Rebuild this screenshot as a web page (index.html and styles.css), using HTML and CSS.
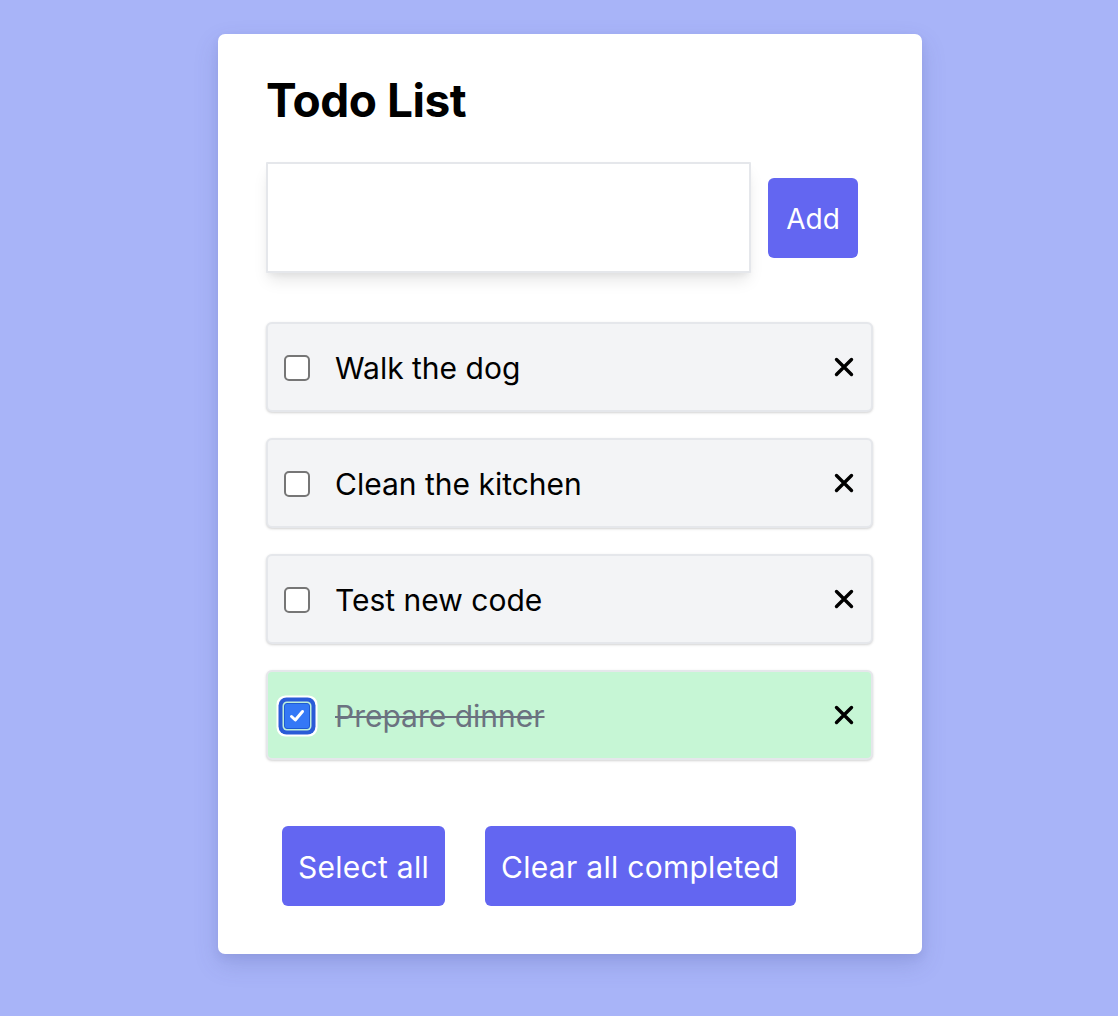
FILE: index.html
```html
<!DOCTYPE html>
<html lang="en">
<head>
<meta charset="utf-8">
<title>Todo List</title>
<link rel="stylesheet" href="styles.css">
</head>
<body>
<main class="card">
  <h1 class="title">Todo List</h1>
  <form class="add-row">
    <input class="add-input" type="text" aria-label="New todo">
    <button class="btn add-btn" type="button">Add</button>
  </form>
  <ul class="list">
    <li class="item">
      <span class="check"></span>
      <span class="label">Walk the dog</span>
      <svg class="remove" viewBox="0 0 20 20" width="20" height="20"><path d="M2.5 2.5 L17.5 17.5 M17.5 2.5 L2.5 17.5" stroke="#000" stroke-width="3.4" stroke-linecap="round"/></svg>
    </li>
    <li class="item">
      <span class="check"></span>
      <span class="label">Clean the kitchen</span>
      <svg class="remove" viewBox="0 0 20 20" width="20" height="20"><path d="M2.5 2.5 L17.5 17.5 M17.5 2.5 L2.5 17.5" stroke="#000" stroke-width="3.4" stroke-linecap="round"/></svg>
    </li>
    <li class="item">
      <span class="check"></span>
      <span class="label">Test new code</span>
      <svg class="remove" viewBox="0 0 20 20" width="20" height="20"><path d="M2.5 2.5 L17.5 17.5 M17.5 2.5 L2.5 17.5" stroke="#000" stroke-width="3.4" stroke-linecap="round"/></svg>
    </li>
    <li class="item done">
      <span class="check checked">
        <svg viewBox="0 0 20 20" width="20" height="20"><path d="M4.5 10.5 L8.3 14 L15.5 5.5" fill="none" stroke="#fff" stroke-width="3" stroke-linecap="round" stroke-linejoin="round"/></svg>
      </span>
      <span class="label">Prepare dinner</span>
      <svg class="remove" viewBox="0 0 20 20" width="20" height="20"><path d="M2.5 2.5 L17.5 17.5 M17.5 2.5 L2.5 17.5" stroke="#000" stroke-width="3.4" stroke-linecap="round"/></svg>
    </li>
  </ul>
  <div class="actions">
    <button class="btn action-btn" type="button">Select all</button>
    <button class="btn action-btn" type="button">Clear all completed</button>
  </div>
</main>
</body>
</html>
```
FILE: styles.css
```css
* { box-sizing: border-box; }
html, body { margin: 0; padding: 0; }
body {
  background: #a8b4f8;
  font-family: Inter, "Noto Sans", sans-serif;
  min-height: 1016px;
  padding-top: 34px;
}
.card {
  width: 704px;
  margin: 0 0 0 218px;
  background: #fff;
  border-radius: 7px;
  box-shadow: 0 10px 25px rgba(60, 70, 140, 0.18), 0 4px 8px rgba(60, 70, 140, 0.08);
  padding: 38px 48px 48px;
}
.title {
  margin: 0;
  font-size: 46px;
  font-weight: 700;
  line-height: 56px;
  color: #000;
  letter-spacing: -0.5px;
}
.add-row {
  display: flex;
  align-items: center;
  margin: 34px 0 0;
  gap: 17px;
}
.add-input {
  width: 485px;
  height: 111px;
  border: 2px solid #e5e7eb;
  border-radius: 1px;
  background: #fff;
  box-shadow: 0 10px 15px -3px rgba(0,0,0,0.1), 0 4px 6px -2px rgba(0,0,0,0.05);
  font: inherit;
  font-size: 28px;
  padding: 0 16px;
  outline: none;
}
.btn {
  background: #6366f1;
  color: #fff;
  border: none;
  border-radius: 6px;
  font-family: Inter, "Noto Sans", sans-serif;
  height: 80px;
  cursor: pointer;
}
.add-btn {
  width: 90px;
  font-size: 28px;
  padding: 2px 0 0;
}
.list {
  list-style: none;
  margin: 49px 0 0;
  padding: 0;
  width: 607px;
  display: flex;
  flex-direction: column;
  gap: 26px;
}
.item {
  display: flex;
  align-items: center;
  height: 90px;
  background: #f3f4f6;
  border: 2px solid #e5e7eb;
  border-radius: 6px;
  box-shadow: 0 1px 3px rgba(0,0,0,0.12), 0 1px 2px rgba(0,0,0,0.06);
  padding: 2px 17px 0 16px;
}
.check {
  width: 26px;
  height: 26px;
  border: 2px solid #767676;
  border-radius: 5px;
  background: #fff;
  flex: none;
  display: flex;
  align-items: center;
  justify-content: center;
}
.check.checked {
  background: #3478f6;
  border: 1px solid #1f5bd0;
  box-shadow: 0 0 0 1.5px #bdeedb, 0 0 0 5.5px #2a5bd7, 0 0 0 7.5px #fff;
  border-radius: 3px;
}
.label {
  flex: 1;
  margin-left: 25px;
  font-size: 30px;
  color: #000;
}
.done {
  background: #c6f6d5;
}
.done .label {
  color: #6b7280;
  text-decoration: line-through;
  text-decoration-thickness: 2px;
}
.remove {
  flex: none;
  margin-top: -2px;
}
.actions {
  display: flex;
  gap: 40px;
  margin: 66px 0 0 16px;
}
.action-btn {
  font-size: 30px;
  padding: 2px 16px 0;
  letter-spacing: 0.28px;
}
```
